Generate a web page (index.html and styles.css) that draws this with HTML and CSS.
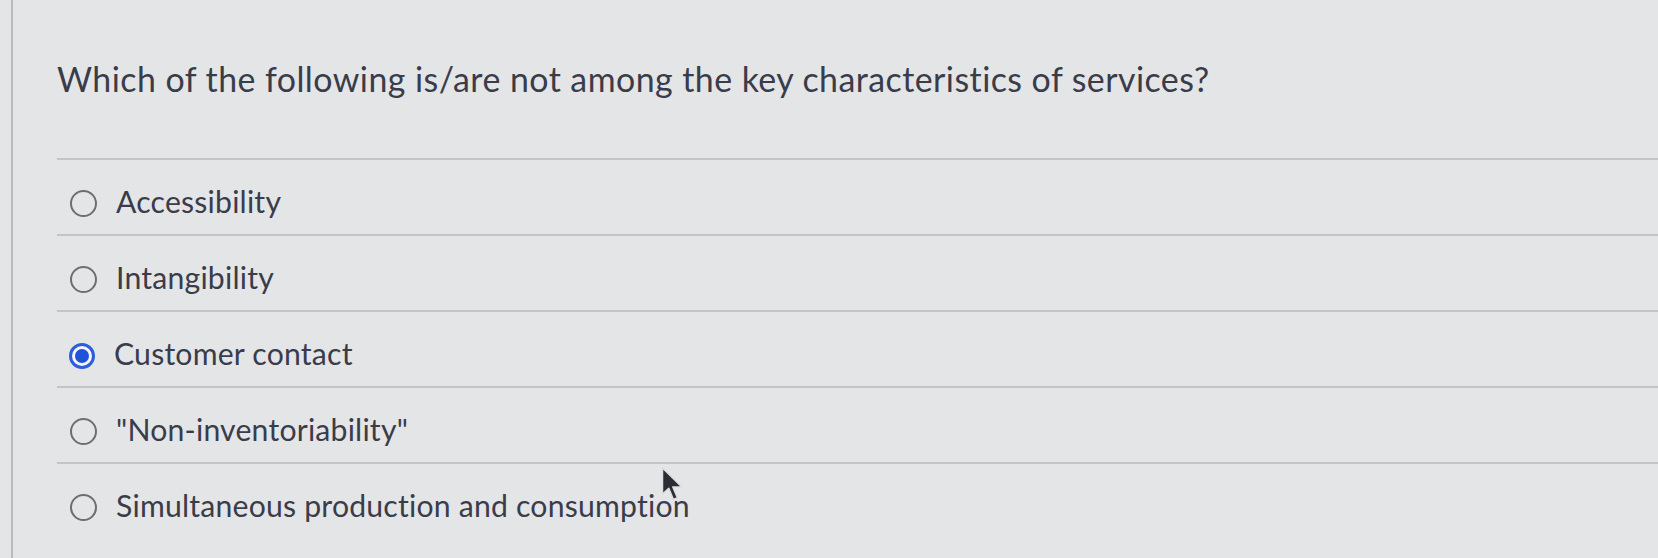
FILE: index.html
```html
<!DOCTYPE html>
<html lang="en">
<head>
  <meta charset="UTF-8" />
  <meta name="viewport" content="width=device-width, initial-scale=1.0" />
  <title>Quiz Question</title>
  <link rel="stylesheet" href="styles.css">
</head>
<body>
  <div class="page">
    <div class="question">
      <div class="question-text">Which of the following is/are not among the key characteristics of services?</div>

      <div class="answers">
        <label class="answer">
          <span class="radio"></span>
          <span class="answer-text">Accessibility</span>
        </label>
        <label class="answer">
          <span class="radio"></span>
          <span class="answer-text">Intangibility</span>
        </label>
        <label class="answer">
          <span class="radio checked"></span>
          <span class="answer-text">Customer contact</span>
        </label>
        <label class="answer">
          <span class="radio"></span>
          <span class="answer-text">"Non-inventoriability"</span>
        </label>
        <label class="answer last">
          <span class="radio"></span>
          <span class="answer-text">Simultaneous production and consumption</span>
          <!-- mouse pointer sitting over the last answer -->
          <svg class="cursor" width="24" height="34" viewBox="0 0 24 34">
            <path d="M1.5 1 L1.5 27 L7.8 21.3 L12.4 32.5 L16.4 30.8 L11.8 20 L20.8 20 Z" fill="#2b2c33" stroke="#dcdde0" stroke-width="1.5" stroke-linejoin="round" />
          </svg>
        </label>
      </div>
    </div>
  </div>
</body>
</html>
```

FILE: styles.css
```css
body {
  margin: 0;
  padding: 0;
  background-color: #e4e5e7;
  color: #3a3c4a;
  font-family: 'Lato', 'Liberation Sans', sans-serif;
  height: 558px;
  overflow: hidden;
}

.page {
  margin-left: 11px;
  border-left: 2px solid #b8babe;
  height: 100%;
  padding-left: 44px;
}

.question {
  padding-top: 59px;
}

.question-text {
  font-size: 33.9px;
  line-height: 1.2;
  letter-spacing: 0.45px;
}

.answers {
  margin-top: 58px;
  border-top: 2px solid #c3c4c8;
}

.answer {
  position: relative;
  display: flex;
  align-items: center;
  gap: 19px;
  height: 65px;
  padding-top: 9px;
  padding-left: 13px;
  border-bottom: 2px solid #c3c4c8;
  box-sizing: content-box;
}

.answer.last {
  border-bottom: none;
}

.answer-text {
  font-size: 30.2px;
  line-height: 1.2;
  letter-spacing: 0.2px;
}

.radio {
  width: 23px;
  height: 23px;
  margin-top: 5px;
  border: 2px solid #6c6e76;
  border-radius: 50%;
  box-sizing: content-box;
  flex-shrink: 0;
}

.radio.checked {
  width: 16px;
  height: 16px;
  border: 3px solid #2c5ddc;
  background: #1f52d8;
  box-shadow: inset 0 0 0 3px #f3f5fb;
  padding: 2px;
  background-clip: content-box;
  margin-left: -1px;
}

.cursor {
  position: absolute;
  left: 604px;
  top: 3px;
}
```
